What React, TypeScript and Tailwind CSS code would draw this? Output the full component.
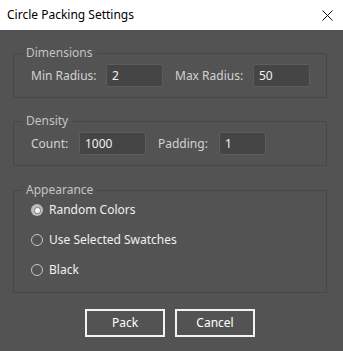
import React from "react"

const font = { fontFamily: '"Noto Sans", "Open Sans", sans-serif' }

const Field = ({ value, width }: { value: string; width: string }) => (
    <div className={`${width} h-[23px] bg-[#454545] border border-[#5c5c5c] rounded-[2px] flex items-center pl-[5px] text-[12px] text-[#f2f2f2]`}>
        {value}
    </div>
)

const Radio = ({ label, checked }: { label: string; checked?: boolean }) => (
    <div className="flex items-center h-[20px]">
        {checked ? (
            <div className="w-[12px] h-[12px] rounded-full bg-[#bdbdbd] flex items-center justify-center">
                <div className="w-[5px] h-[5px] rounded-full bg-[#f4f4f4] ring-1 ring-[#8c8c8c]" />
            </div>
        ) : (
            <div className="w-[12px] h-[12px] rounded-full border border-[#c6c6c6]" />
        )}
        <span className="ml-[6px] text-[12px] text-[#f0f0f0]">{label}</span>
    </div>
)

const Group = ({ title, children, className }: { title: string; children: React.ReactNode; className?: string }) => (
    <fieldset className={`border border-[#474747] rounded-[2px] ${className || ""}`}>
        <legend className="ml-[8px] px-[4px] text-[12px] leading-[16px] text-[#c4c4c4]">{title}</legend>
        <div className="pl-[17px]">{children}</div>
    </fieldset>
)

export default function App() {
    return (
        <div style={font} className="w-[343px] h-[351px] bg-[#535353] flex flex-col overflow-hidden">
            <div className="h-[30px] bg-white flex items-center justify-between pl-[7px] pr-[10px] shrink-0">
                <span className="text-[12px] text-black">Circle Packing Settings</span>
                <svg width="11" height="11" viewBox="0 0 11 11">
                    <path d="M0.5 0.5 L10.5 10.5 M10.5 0.5 L0.5 10.5" stroke="#111" strokeWidth="1" />
                </svg>
            </div>

            <div className="pl-[13px] pr-[16px] pt-[15px] flex flex-col">
                <Group title="Dimensions" className="pt-[3px] pb-[10px]">
                    <div className="flex items-center">
                        <span className="w-[75px] text-[12px] text-[#d2d2d2]">Min Radius:</span>
                        <Field value="2" width="w-[57px]" />
                        <span className="ml-[12px] w-[78px] text-[12px] text-[#d2d2d2]">Max Radius:</span>
                        <Field value="50" width="w-[57px]" />
                    </div>
                </Group>

                <Group title="Density" className="mt-[15px] pt-[3px] pb-[10px]">
                    <div className="flex items-center">
                        <span className="w-[48px] text-[12px] text-[#d2d2d2]">Count:</span>
                        <Field value="1000" width="w-[67px]" />
                        <span className="ml-[12px] w-[61px] text-[12px] text-[#d2d2d2]">Padding:</span>
                        <Field value="1" width="w-[47px]" />
                    </div>
                </Group>

                <Group title="Appearance" className="mt-[16px] pt-[2px] pb-[12px]">
                    <div className="flex flex-col gap-[10px]">
                        <Radio label="Random Colors" checked />
                        <Radio label="Use Selected Swatches" />
                        <Radio label="Black" />
                    </div>
                </Group>

                <div className="mt-[16px] flex justify-center gap-[10px]">
                    <button className="w-[80px] h-[28px] border-2 border-[#f2f2f2] text-[12px] text-white">Pack</button>
                    <button className="w-[80px] h-[28px] border-2 border-[#f2f2f2] text-[12px] text-white">Cancel</button>
                </div>
            </div>
        </div>
    )
}
